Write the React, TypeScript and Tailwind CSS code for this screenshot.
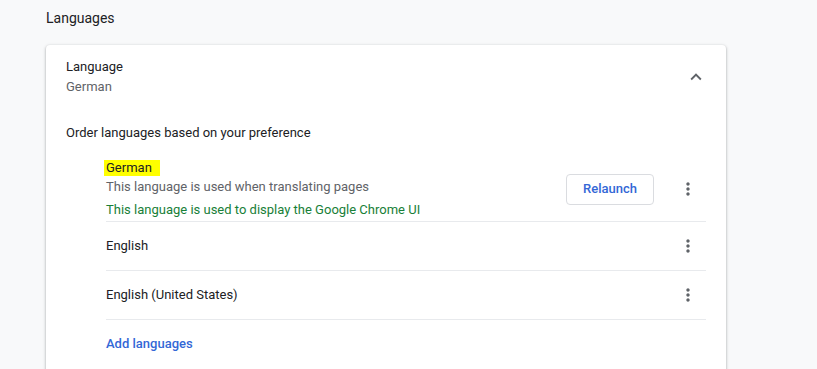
import React from "react";

const Dots = () => (
  <svg width="20" height="20" viewBox="0 0 24 24" fill="#5f6368">
    <path d="M12 8c1.1 0 2-.9 2-2s-.9-2-2-2-2 .9-2 2 .9 2 2 2zm0 2c-1.1 0-2 .9-2 2s.9 2 2 2 2-.9 2-2-.9-2-2-2zm0 6c-1.1 0-2 .9-2 2s.9 2 2 2 2-.9 2-2-.9-2-2-2z" />
  </svg>
);

const Chevron = () => (
  <svg width="22" height="22" viewBox="0 0 24 24" fill="#5f6368">
    <path d="M12 8l-6 6 1.41 1.41L12 10.83l4.59 4.58L18 14z" />
  </svg>
);

export default function App() {
  return (
    <div
      className="min-h-[369px] bg-[#f8f9fa] pl-[46px] pt-[8px] text-[13px] text-[#202124]"
      style={{ fontFamily: "Roboto, 'Liberation Sans', sans-serif" }}
    >
      <div className="text-[14px] leading-[20px]">Languages</div>
      <div className="mt-[17px] w-[680px] rounded-[4px] bg-white pb-[20px] shadow-[0_1px_2px_0_rgba(60,64,67,0.3),0_1px_3px_1px_rgba(60,64,67,0.15)]">
        <div className="flex items-center pl-[20px] pr-[12px] pt-[12px]">
          <div className="flex-1">
            <div className="leading-[20px]">Language</div>
            <div className="leading-[20px] text-[#5f6368]">German</div>
          </div>
          <div className="flex h-[36px] w-[36px] items-center justify-center">
            <Chevron />
          </div>
        </div>
        <div className="mt-[26px] pl-[20px] leading-[20px]">Order languages based on your preference</div>
        <div className="ml-[60px] mr-[20px] mt-[15px]">
          <div className="flex items-center border-b border-[#e8eaed] pb-[1px]">
            <div className="flex-1">
              <div className="leading-[20px]">
                <span className="-ml-[2px] inline-block bg-[#ffff00] pl-[2px] pr-[8px] leading-[16px]">German</span>
              </div>
              <div className="leading-[18px] text-[#5f6368]">This language is used when translating pages</div>
              <div className="mt-[4px] leading-[20px] text-[#188038]">This language is used to display the Google Chrome UI</div>
            </div>
            <button className="flex h-[31px] w-[88px] items-center justify-center rounded-[4px] border border-[#dadce0] bg-white font-medium text-[#3367d6]">
              Relaunch
            </button>
            <div className="ml-[16px] flex h-[36px] w-[36px] items-center justify-center">
              <Dots />
            </div>
          </div>
          <div className="flex h-[49px] items-center border-b border-[#e8eaed]">
            <div className="flex-1">English</div>
            <div className="flex h-[36px] w-[36px] items-center justify-center">
              <Dots />
            </div>
          </div>
          <div className="flex h-[49px] items-center border-b border-[#e8eaed]">
            <div className="flex-1">English (United States)</div>
            <div className="flex h-[36px] w-[36px] items-center justify-center">
              <Dots />
            </div>
          </div>
          <div className="pt-[14px] font-medium leading-[20px] text-[#3367d6]">Add languages</div>
        </div>
      </div>
    </div>
  );
}
